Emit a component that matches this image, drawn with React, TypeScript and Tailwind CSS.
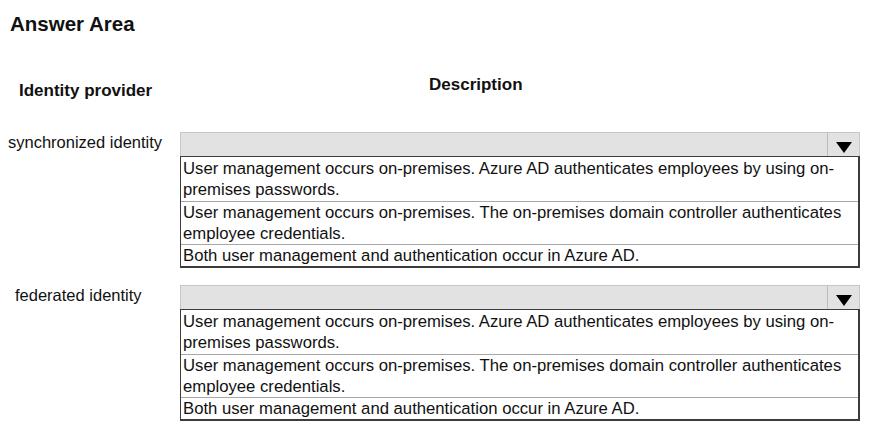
import React from 'react';

interface Question {
  label: string;
  labelPad: string;
  options: string[];
}

const options = [
  'User management occurs on-premises. Azure AD authenticates employees by using on-premises passwords.',
  'User management occurs on-premises. The on-premises domain controller authenticates employee credentials.',
  'Both user management and authentication occur in Azure AD.',
];

const questions: Question[] = [
  { label: 'synchronized identity', labelPad: 'pl-[8px]', options },
  { label: 'federated identity', labelPad: 'pl-[15px]', options },
];

function Dropdown({ items }: { items: string[] }) {
  return (
    <div className="w-[680px]">
      <div className="flex h-[24px] border border-b-0 border-[#c6c6c6] bg-[#e2e2e2]">
        <div className="flex-1" />
        <div className="flex w-[32px] items-center justify-center border-l border-[#bdbdbd] pt-[6px]">
          <svg width="16" height="11" viewBox="0 0 16 11">
            <polygon points="0,0 16,0 8,11" fill="#000" />
          </svg>
        </div>
      </div>
      <div className="border border-r-2 border-b-2 border-[#3c3c3c] bg-white text-[16.7px]">
        {items.map((item, i) => (
          <div
            key={i}
            className={`pl-[2px] pr-[12px] leading-[21px] ${
              i === 0 ? 'py-[1px]' : 'border-t border-[#a8a8a8]'
            }`}
          >
            {item}
          </div>
        ))}
      </div>
    </div>
  );
}

export default function App() {
  return (
    <div className="min-h-[431px] w-[869px] bg-white text-[#111] font-['Liberation_Sans',Arial,sans-serif]">
      <h1 className="pl-[10px] pt-[12px] text-[20.5px] font-bold leading-[24px]">Answer Area</h1>

      <div className="mt-[39px] flex text-[17px] font-bold leading-[20px]">
        <div className="w-[180px] pl-[19px] pt-[6px]">Identity provider</div>
        <div className="pl-[249px]">Description</div>
      </div>

      <div className="mt-[31px] flex flex-col gap-[17px] text-[16.5px]">
        {questions.map((q) => (
          <div key={q.label} className="flex">
            <div className={`w-[180px] leading-[20px] ${q.labelPad}`}>{q.label}</div>
            <Dropdown items={q.options} />
          </div>
        ))}
      </div>
    </div>
  );
}
